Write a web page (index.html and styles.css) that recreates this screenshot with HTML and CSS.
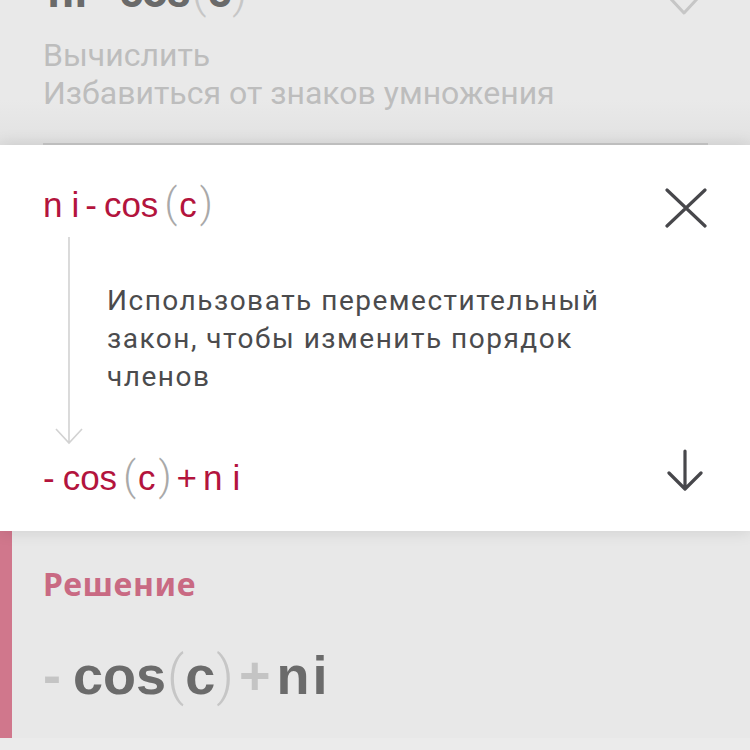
FILE: index.html
```html
<!DOCTYPE html>
<html lang="ru">
<head>
<meta charset="utf-8">
<link rel="stylesheet" href="styles.css">
</head>
<body>
<div class="page">
  <section class="header">
    <div class="header-top">
      <div class="hformula"><span class="v">n</span><span class="v hi">i</span><span class="op">-</span><span class="v fn">cos</span><span class="par">(</span><span class="v">c</span><span class="par">)</span></div>
      <svg class="chev" width="30" height="18" viewBox="0 0 30 18"><polyline points="1,-1 14,13 27,-1" fill="none" stroke="#c6c6c6" stroke-width="3" stroke-linecap="round" stroke-linejoin="round"/></svg>
    </div>
    <div class="hcaption">
      <div>Вычислить</div>
      <div>Избавиться от знаков умножения</div>
    </div>
    <div class="divider"></div>
  </section>

  <section class="card">
    <div class="row row1">
      <div class="formula"><span class="v">n</span><span class="v i1">i</span><span class="op minus">-</span><span class="v fn">cos</span><span class="par pl">(</span><span class="v">c</span><span class="par pr">)</span></div>
      <svg class="icon-x" width="42" height="40" viewBox="0 0 42 40"><path d="M2 2 L40 38 M40 2 L2 38" stroke="#47474b" stroke-width="3.2" stroke-linecap="round"/></svg>
    </div>
    <div class="body">
      <svg class="flow" width="52" height="208" viewBox="0 0 52 208"><path d="M26 0 V206 M13 192 L26 206 L39 192" fill="none" stroke="#d2d2d2" stroke-width="1.6"/></svg>
      <p class="desc">Использовать переместительный закон, чтобы изменить порядок членов</p>
    </div>
    <div class="row row2">
      <div class="formula"><span class="op minus2">-</span><span class="v fn">cos</span><span class="par pl">(</span><span class="v">c</span><span class="par pr">)</span><span class="op plus">+</span><span class="v">n</span><span class="v i2">i</span></div>
      <svg class="icon-down" width="40" height="42" viewBox="0 0 40 42"><path d="M20 2 V39 M4 24 L20 40 L36 24" fill="none" stroke="#47474b" stroke-width="3.2" stroke-linecap="round" stroke-linejoin="round"/></svg>
    </div>
  </section>

  <section class="solution">
    <div class="bar"></div>
    <div class="sol-content">
      <div class="sol-title">Решение</div>
      <div class="sol-formula"><span class="op">-</span><span class="v fn">cos</span><span class="par">(</span><span class="v">c</span><span class="par">)</span><span class="op plusb">+</span><span class="v">n</span><span class="v ib">i</span></div>
    </div>
  </section>
  <div class="footer"></div>
</div>
</body>
</html>
```
FILE: styles.css
```css
html, body {
  margin: 0;
  padding: 0;
  background: #e9e9e9;
}
body {
  font-family: Roboto, "Liberation Sans", sans-serif;
  width: 750px;
  height: 750px;
  overflow: hidden;
}
.page {
  display: flex;
  flex-direction: column;
  width: 750px;
}

/* header */
.header {
  height: 145px;
  box-sizing: border-box;
  padding: 0 42px 0 43px;
  overflow: hidden;
  display: flex;
  flex-direction: column;
  background: linear-gradient(#e9e9e9 0, #e9e9e9 100px, #e2e2e2 143px);
}
.header-top {
  height: 18px;
  display: flex;
  justify-content: space-between;
  align-items: flex-end;
  padding-right: 8px;
}
.hformula {
  font-family: Roboto, "Liberation Sans", sans-serif;
  font-weight: 700;
  font-size: 46px;
  line-height: 52px;
  color: #6a6a6a;
  margin-bottom: 1px;
  padding-left: 5px;
  white-space: nowrap;
  letter-spacing: -1px;
}
.hformula .hi { margin-left: 2px; }
.hformula .op { color: #c2c2c2; margin: 0 8px; }
.hformula .par { color: #c6c6c6; font-weight: 300; margin: 0 2px; }
.chev { display: block; margin-bottom: 0; }
.hcaption {
  margin-top: 18px;
  font-family: Roboto, "Liberation Sans", sans-serif;
  font-size: 32px;
  line-height: 38px;
  color: #bdbdbd;
}
.divider {
  margin-top: auto;
  height: 2px;
  background: #c9c9c9;
}

/* card */
.card {
  background: #ffffff;
  height: 386px;
  box-sizing: border-box;
  padding: 35px 43px 0 43px;
  box-shadow: 0 0 16px rgba(0, 0, 0, 0.12);
  position: relative;
  z-index: 1;
}
.row {
  display: flex;
  justify-content: space-between;
  align-items: flex-start;
}
.formula {
  font-family: "Liberation Sans", Roboto, sans-serif;
  font-size: 35px;
  line-height: 48px;
  color: #b3143d;
  white-space: nowrap;
}
.formula .par {
  color: #a9a9a9;
  font-family: Roboto, sans-serif;
  font-weight: 300;
  font-size: 40px;
}
.formula .i1 { margin-left: 9px; }
.formula .minus { margin: 0 7px 0 6px; }
.formula .pl { margin: 0 2px 0 6px; }
.formula .pr { margin-left: 3px; }
.formula .minus2 { margin-right: 8px; }
.formula .plus { margin: 0 6px 0 5px; }
.formula .i2 { margin-left: 10px; }
.icon-x { display: block; margin-top: 8px; }
.icon-down { display: block; margin-top: -4px; margin-right: 2px; }

.body {
  display: flex;
  margin-top: 8px;
  height: 208px;
}
.flow { display: block; flex: none; }
.desc {
  margin: 0 0 0 12px;
  padding-top: 45px;
  font-family: Roboto, "Liberation Sans", sans-serif;
  font-size: 28px;
  letter-spacing: 1.5px;
  line-height: 38px;
  color: #4b4b4d;
  width: 540px;
}
.row2 { margin-top: 8px; }

/* solution */
.solution {
  height: 207px;
  display: flex;
  background: #e8e8e8;
}
.bar {
  width: 12px;
  background: #d0778c;
  flex: none;
}
.sol-content {
  padding: 33px 0 0 31px;
}
.sol-title {
  font-family: "Noto Sans", "Open Sans", Roboto, sans-serif;
  font-weight: 700;
  font-size: 32px;
  letter-spacing: 0.6px;
  line-height: 40px;
  color: #c96a83;
}
.sol-formula {
  margin-top: 41px;
  font-family: "Liberation Sans", Roboto, sans-serif;
  font-weight: 700;
  font-size: 54px;
  line-height: 60px;
  color: #6b6b6b;
  white-space: nowrap;
}
.sol-formula .op { color: #c4c4c4; }
.sol-formula .fn { margin-left: 12px; }
.sol-formula .par { color: #c6c6c6; font-weight: 300; font-family: Roboto, sans-serif; margin: 0 1px; }
.sol-formula .plusb { margin: 0 6px 0 4px; }
.sol-formula .ib { margin-left: 3px; }
.footer {
  height: 12px;
  background: #ebebeb;
}
```
